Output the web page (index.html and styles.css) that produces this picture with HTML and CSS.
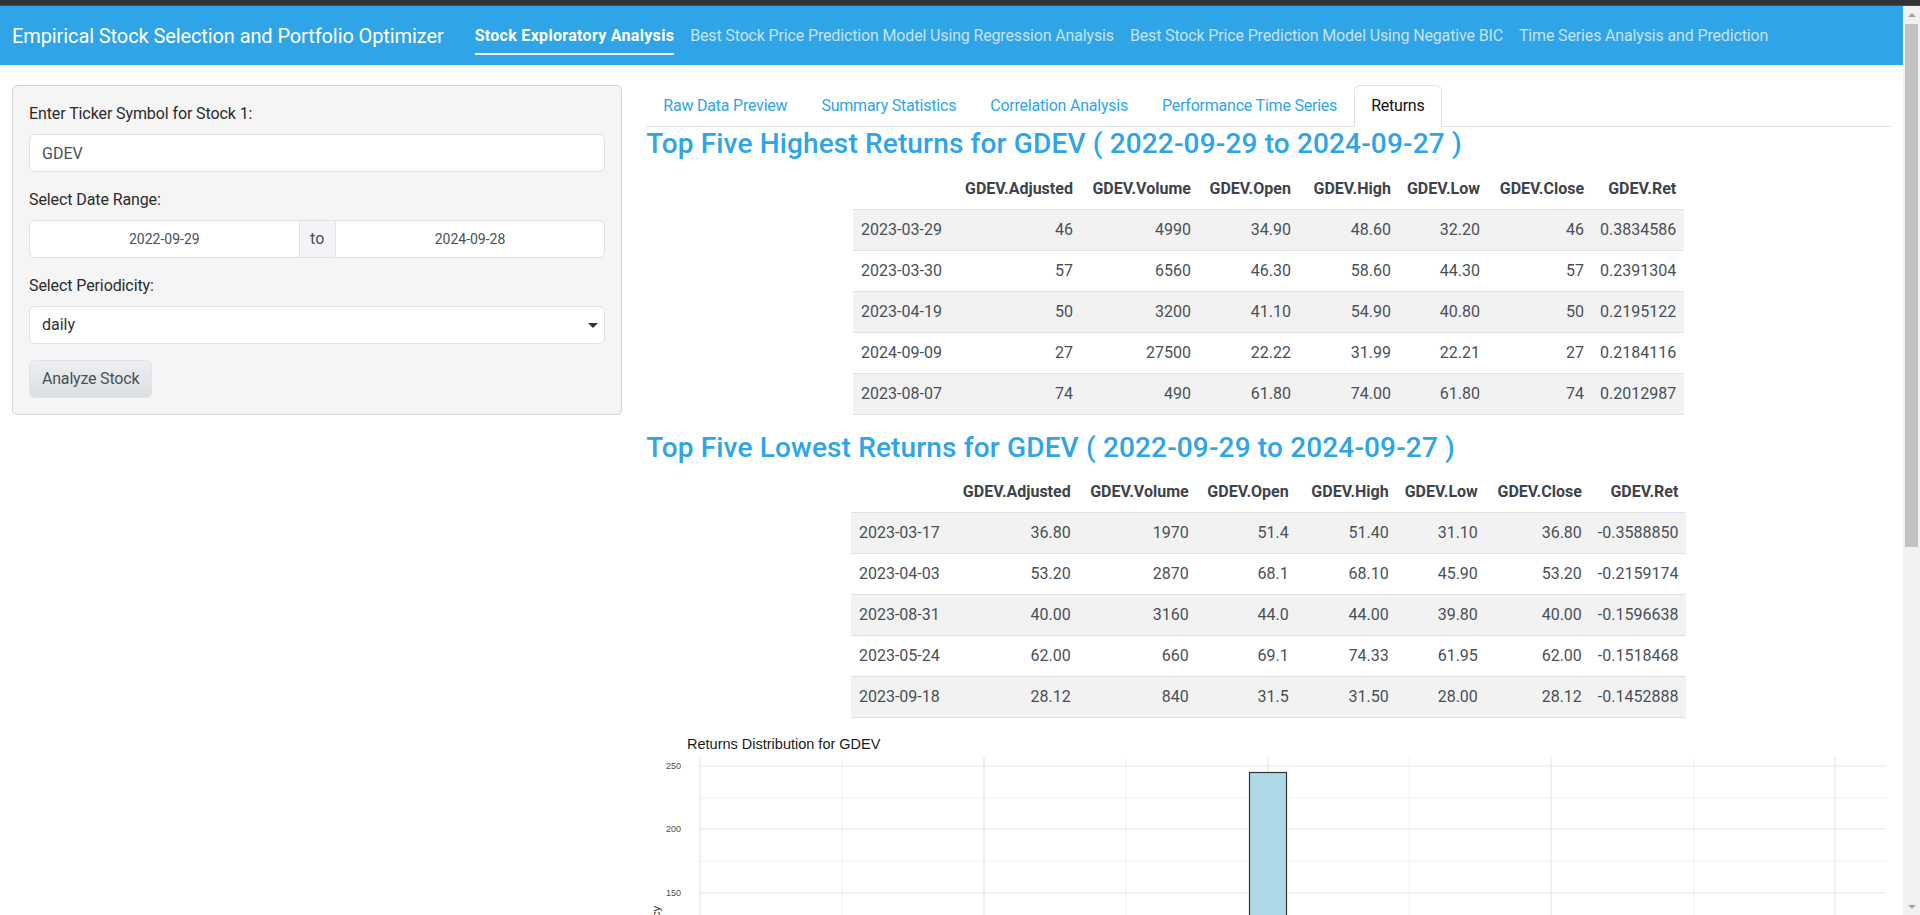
FILE: index.html
```html
<!DOCTYPE html>
<html lang="en">
<head>
<meta charset="utf-8">
<title>Empirical Stock Selection and Portfolio Optimizer</title>
<link rel="stylesheet" href="styles.css">
</head>
<body>
<div class="chrome-strip"></div>
<div class="window">
  <div class="app">
    <nav class="navbar">
      <span class="brand">Empirical Stock Selection and Portfolio Optimizer</span>
      <ul class="nav-links">
        <li class="nav-link active"><span class="nav-label">Stock Exploratory Analysis</span></li>
        <li class="nav-link"><span class="nav-label">Best Stock Price Prediction Model Using Regression Analysis</span></li>
        <li class="nav-link"><span class="nav-label">Best Stock Price Prediction Model Using Negative BIC</span></li>
        <li class="nav-link"><span class="nav-label">Time Series Analysis and Prediction</span></li>
      </ul>
    </nav>

    <div class="page">
      <div class="col-side">
        <div class="well">
          <div class="form-group">
            <label class="control-label">Enter Ticker Symbol for Stock 1:</label>
            <input class="form-control" type="text" value="GDEV">
          </div>
          <div class="form-group">
            <label class="control-label">Select Date Range:</label>
            <div class="input-group">
              <input class="form-control date-input date-start" type="text" value="2022-09-29">
              <span class="addon">to</span>
              <input class="form-control date-input date-end" type="text" value="2024-09-28">
            </div>
          </div>
          <div class="form-group">
            <label class="control-label">Select Periodicity:</label>
            <div class="form-control select-box"><span>daily</span><span class="caret"></span></div>
          </div>
          <button class="btn" type="button">Analyze Stock</button>
        </div>
      </div>

      <div class="col-main">
        <ul class="tabs">
          <li class="tab">Raw Data Preview</li>
          <li class="tab">Summary Statistics</li>
          <li class="tab">Correlation Analysis</li>
          <li class="tab">Performance Time Series</li>
          <li class="tab active">Returns</li>
        </ul>

        <h3 class="heading">Top Five Highest Returns for GDEV ( 2022-09-29 to 2024-09-27 )</h3>
        <table class="data-table">
          <thead>
            <tr><th class="date"></th><th>GDEV.Adjusted</th><th>GDEV.Volume</th><th>GDEV.Open</th><th>GDEV.High</th><th>GDEV.Low</th><th>GDEV.Close</th><th>GDEV.Ret</th></tr>
          </thead>
          <tbody>
            <tr><td class="date">2023-03-29</td><td>46</td><td>4990</td><td>34.90</td><td>48.60</td><td>32.20</td><td>46</td><td>0.3834586</td></tr>
            <tr><td class="date">2023-03-30</td><td>57</td><td>6560</td><td>46.30</td><td>58.60</td><td>44.30</td><td>57</td><td>0.2391304</td></tr>
            <tr><td class="date">2023-04-19</td><td>50</td><td>3200</td><td>41.10</td><td>54.90</td><td>40.80</td><td>50</td><td>0.2195122</td></tr>
            <tr><td class="date">2024-09-09</td><td>27</td><td>27500</td><td>22.22</td><td>31.99</td><td>22.21</td><td>27</td><td>0.2184116</td></tr>
            <tr><td class="date">2023-08-07</td><td>74</td><td>490</td><td>61.80</td><td>74.00</td><td>61.80</td><td>74</td><td>0.2012987</td></tr>
          </tbody>
        </table>

        <h3 class="heading">Top Five Lowest Returns for GDEV ( 2022-09-29 to 2024-09-27 )</h3>
        <table class="data-table">
          <thead>
            <tr><th class="date"></th><th>GDEV.Adjusted</th><th>GDEV.Volume</th><th>GDEV.Open</th><th>GDEV.High</th><th>GDEV.Low</th><th>GDEV.Close</th><th>GDEV.Ret</th></tr>
          </thead>
          <tbody>
            <tr><td class="date">2023-03-17</td><td>36.80</td><td>1970</td><td>51.4</td><td>51.40</td><td>31.10</td><td>36.80</td><td>-0.3588850</td></tr>
            <tr><td class="date">2023-04-03</td><td>53.20</td><td>2870</td><td>68.1</td><td>68.10</td><td>45.90</td><td>53.20</td><td>-0.2159174</td></tr>
            <tr><td class="date">2023-08-31</td><td>40.00</td><td>3160</td><td>44.0</td><td>44.00</td><td>39.80</td><td>40.00</td><td>-0.1596638</td></tr>
            <tr><td class="date">2023-05-24</td><td>62.00</td><td>660</td><td>69.1</td><td>74.33</td><td>61.95</td><td>62.00</td><td>-0.1518468</td></tr>
            <tr><td class="date">2023-09-18</td><td>28.12</td><td>840</td><td>31.5</td><td>31.50</td><td>28.00</td><td>28.12</td><td>-0.1452888</td></tr>
          </tbody>
        </table>

        <svg class="plot" width="1244" height="420" viewBox="0 0 1244 420" xmlns="http://www.w3.org/2000/svg">
          <text class="plot-title" x="41" y="15">Returns Distribution for GDEV</text>
          <g class="grid-minor">
            <line x1="53" x2="1240" y1="64" y2="64"/>
            <line x1="53" x2="1240" y1="127" y2="127"/>
            <line x1="53" x2="1240" y1="190" y2="190"/>
            <line x1="196" x2="196" y1="23" y2="420"/>
            <line x1="480" x2="480" y1="23" y2="420"/>
            <line x1="763" x2="763" y1="23" y2="420"/>
            <line x1="1048" x2="1048" y1="23" y2="420"/>
          </g>
          <g class="grid-major">
            <line x1="53" x2="1240" y1="32" y2="32"/>
            <line x1="53" x2="1240" y1="95" y2="95"/>
            <line x1="53" x2="1240" y1="159" y2="159"/>
            <line x1="54" x2="54" y1="23" y2="420"/>
            <line x1="338" x2="338" y1="23" y2="420"/>
            <line x1="622" x2="622" y1="23" y2="420"/>
            <line x1="905" x2="905" y1="23" y2="420"/>
            <line x1="1189" x2="1189" y1="23" y2="420"/>
          </g>
          <g class="tick-labels">
            <text x="35" y="35">250</text>
            <text x="35" y="98">200</text>
            <text x="35" y="162">150</text>
          </g>
          <rect class="bar" x="603.5" y="38.5" width="37" height="400"/>
          <text class="axis-title" transform="translate(14,172) rotate(-90)">Frequency</text>
        </svg>
      </div>
    </div>
  </div>

  <div class="scrollbar">
    <div class="sb-arrow"><span class="sb-up"></span></div>
    <div class="sb-track"><div class="sb-thumb"></div></div>
    <div class="sb-arrow"><span class="sb-down"></span></div>
  </div>
</div>
</body>
</html>
```

FILE: styles.css
```css
* { box-sizing: border-box; }

html, body {
  margin: 0;
  padding: 0;
  height: 915px;
  overflow: hidden;
  background: #fff;
}

body {
  font-family: Roboto, "Liberation Sans", sans-serif;
  font-size: 16px;
  line-height: 24px;
  color: #495057;
  display: flex;
  flex-direction: column;
}

.chrome-strip {
  height: 6px;
  flex: none;
  background: #333;
  border-bottom: 1px solid #4a4a4a;
}

.window {
  flex: 1;
  display: flex;
  min-height: 0;
}

.app {
  flex: 1;
  min-width: 0;
  overflow: hidden;
}

/* navbar */
.navbar {
  height: 59px;
  background: #2fa4e7;
  display: flex;
  align-items: center;
  padding: 0 12px;
}

.brand {
  font-size: 20px;
  line-height: 30px;
  color: #fff;
  white-space: nowrap;
  letter-spacing: -0.1px;
  margin-right: 23px;
}

.nav-links {
  list-style: none;
  margin: 0;
  padding: 0;
  display: flex;
}

.nav-link {
  padding: 8px 8px 0;
  color: rgba(255, 255, 255, 0.72);
  white-space: nowrap;
  letter-spacing: -0.15px;
}

.nav-label {
  display: block;
  padding-bottom: 5px;
  border-bottom: 2px solid transparent;
}

.nav-link.active {
  color: #fff;
  font-weight: 700;
  letter-spacing: 0.3px;
}

.nav-link.active .nav-label {
  border-bottom-color: #fff;
}

/* page grid */
.page {
  display: flex;
  padding-top: 20px;
}

.col-side {
  width: 33.3333%;
  padding: 0 12px;
}

.col-main {
  width: 66.6667%;
  padding: 0 12px;
}

/* sidebar */
.well {
  background: #f5f5f5;
  border: 1px solid #d3d3d3;
  border-radius: 5px;
  padding: 16px;
}

.form-group {
  margin-bottom: 16px;
}

.control-label {
  display: block;
  margin-bottom: 8px;
  color: #2b2b2b;
  letter-spacing: -0.1px;
}

.form-control {
  display: block;
  width: 100%;
  height: 38px;
  padding: 6px 12px;
  font-family: inherit;
  font-size: 16px;
  line-height: 24px;
  color: #495057;
  background: #fff;
  border: 1px solid #dee2e6;
  border-radius: 6px;
  outline: none;
}

.input-group {
  display: flex;
}

.date-input {
  flex: 1;
  min-width: 0;
  font-size: 14px;
  text-align: center;
}

.date-start {
  border-top-right-radius: 0;
  border-bottom-right-radius: 0;
}

.date-end {
  border-top-left-radius: 0;
  border-bottom-left-radius: 0;
}

.addon {
  width: 35px;
  flex: none;
  text-align: center;
  padding: 6px 0;
  background: #f3f4f6;
  border-top: 1px solid #dee2e6;
  border-bottom: 1px solid #dee2e6;
  color: #495057;
}

.select-box {
  display: flex;
  align-items: center;
  justify-content: space-between;
  padding-right: 6px;
  color: #333;
}

.caret {
  width: 0;
  height: 0;
  border-left: 5px solid transparent;
  border-right: 5px solid transparent;
  border-top: 5px solid #333;
}

.btn {
  height: 38px;
  padding: 6px 12px;
  font-family: inherit;
  font-size: 16px;
  line-height: 24px;
  letter-spacing: -0.2px;
  color: #495057;
  background: linear-gradient(#eceef1, #dcdfe3);
  border: 1px solid #e1e4e8;
  border-radius: 6px;
}

/* tabs */
.tabs {
  list-style: none;
  margin: 0;
  padding: 0;
  display: flex;
  border-bottom: 1px solid #dee2e6;
}

.tab {
  padding: 8px 16px;
  margin-bottom: -1px;
  color: #2fa4e7;
  border: 1px solid transparent;
  border-top-left-radius: 6px;
  border-top-right-radius: 6px;
  white-space: nowrap;
  letter-spacing: -0.22px;
}

.tab.active {
  color: #111;
  background: #fff;
  border-color: #dee2e6 #dee2e6 #fff;
}

/* headings & tables */
.heading {
  margin: 0 0 8px;
  font-size: 28px;
  line-height: 1.2;
  font-weight: 500;
  letter-spacing: 0.15px;
  color: #2fa4e7;
}

.data-table {
  margin: 0 auto 16px;
  border-collapse: collapse;
  font-size: 16px;
  line-height: 24px;
  color: #495057;
}

.data-table th,
.data-table td {
  padding: 8px;
  text-align: right;
  white-space: nowrap;
  border-bottom: 1px solid #dee2e6;
}

.data-table th {
  font-weight: 700;
  color: #3d434a;
}

.data-table th:nth-child(2) { width: 131px; }
.data-table th:nth-child(3) { width: 118px; }
.data-table th:nth-child(4) { width: 100px; }
.data-table th:nth-child(5) { width: 100px; }
.data-table th:nth-child(6) { width: 89px; }
.data-table th:nth-child(7) { width: 104px; }
.data-table th:nth-child(8) { min-width: 88px; }

.data-table .date {
  text-align: left;
}

.data-table tbody tr:nth-child(odd) {
  background: #f2f2f2;
}

/* plot */
.plot {
  display: block;
}

.plot-title {
  font-family: "Liberation Sans", sans-serif;
  font-size: 14.5px;
  fill: #1a1a1a;
}

.grid-minor line {
  stroke: #f1f1f1;
  stroke-width: 1;
}

.grid-major line {
  stroke: #e8e8e8;
  stroke-width: 1.2;
}

.tick-labels text {
  font-family: "Liberation Sans", sans-serif;
  font-size: 9px;
  fill: #4d4d4d;
  text-anchor: end;
}

.bar {
  fill: #add8e6;
  stroke: #333;
  stroke-width: 1.2;
}

.axis-title {
  font-family: "Liberation Sans", sans-serif;
  font-size: 11px;
  fill: #1a1a1a;
  text-anchor: end;
}

/* fake window scrollbar */
.scrollbar {
  width: 17px;
  flex: none;
  background: #f1f1f1;
  display: flex;
  flex-direction: column;
}

.sb-arrow {
  height: 17px;
  flex: none;
  display: flex;
  align-items: center;
  justify-content: center;
}

.sb-up,
.sb-down {
  width: 0;
  height: 0;
  border-left: 4px solid transparent;
  border-right: 4px solid transparent;
}

.sb-up { border-bottom: 4px solid #a3a3a3; }
.sb-down { border-top: 4px solid #a3a3a3; }

.sb-track {
  flex: 1;
  padding: 1px 2px;
}

.sb-thumb {
  height: 523px;
  background: #c1c1c1;
}
```
